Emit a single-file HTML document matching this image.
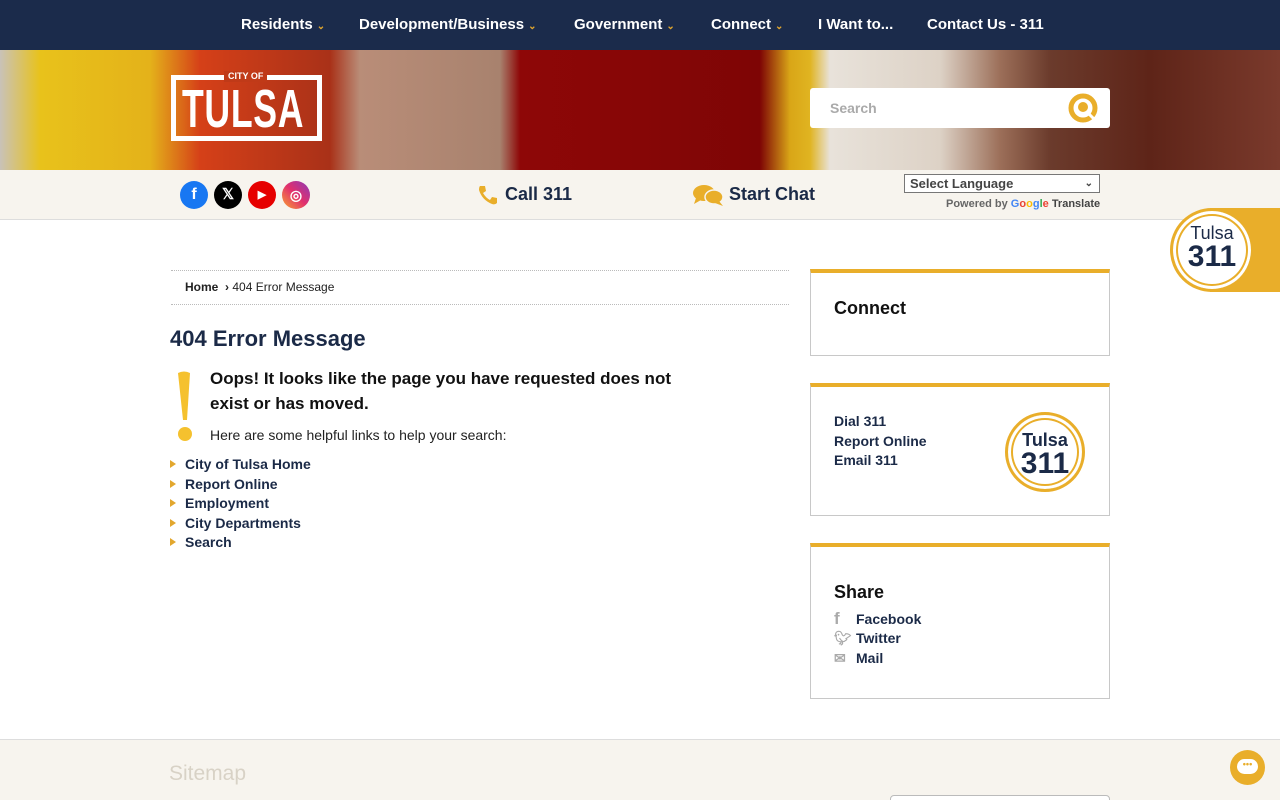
<!DOCTYPE html>
<html><head><meta charset="utf-8"><style>
*{margin:0;padding:0;box-sizing:border-box}
html,body{width:1280px;height:800px;overflow:hidden}
body{font-family:"Liberation Sans",sans-serif;color:#1b2a47;background:#fff;position:relative}
.nav{height:50px;background:#1b2b4b;color:#fff;font-weight:bold;font-size:15px;position:relative}
.nav span{position:absolute;top:16px;white-space:nowrap}
.nav i{color:#e2a72e;font-style:normal;font-size:10px;margin-left:4px}
.banner{position:absolute;top:50px;left:0;width:1280px;height:120px;overflow:hidden;
background:linear-gradient(90deg,#c9c2b8 0,#e8c21b 40px,#e4b21a 150px,#d54018 200px,#a93118 330px,#b98d78 360px,#a8826e 500px,#8e0707 520px,#7e0505 760px,#d9a617 790px,#e0b421 810px,#e8e2da 830px,#ddd2c6 940px,#9c6f59 1000px,#6b3b2c 1050px,#5e2418 1150px,#7a3a2c 1280px)}
.logo{position:absolute;left:171px;top:75px;width:151px;height:66px;border:5px solid #fff}
.logo .t{position:absolute;left:6px;top:2px;font-size:54px;font-weight:bold;color:#fff;letter-spacing:1px;line-height:54px;transform:scaleX(.66);transform-origin:left;white-space:nowrap}
.logo .c{position:absolute;left:48px;top:-9px;background:#c03a18;color:#fff;font-size:9px;font-weight:bold;padding:0 4px;line-height:11px}
.search{position:absolute;left:810px;top:88px;width:300px;height:40px;background:#fff;border-radius:3px}
.search span{position:absolute;left:20px;top:12px;color:#aaa;font-weight:bold;font-size:14px}
.bar{position:absolute;top:170px;left:0;width:1280px;height:50px;background:#f7f4ee;border-bottom:1px solid #ddd}
.soc{position:absolute;top:181px;width:28px;height:28px;border-radius:50%;color:#fff;font-weight:bold;text-align:center;line-height:28px;font-size:16px}
.bt{position:absolute;top:184px;font-weight:bold;font-size:18px;color:#1b2a47}
.sel{position:absolute;left:904px;top:174px;width:196px;height:19px;border:1px solid #777;background:#fff;font-size:13px;font-weight:bold;color:#444;padding-left:5px;line-height:17px}
.pw{position:absolute;left:946px;top:198px;font-size:11px;color:#666;font-weight:bold}
.crumb{position:absolute;left:171px;top:270px;width:618px;height:35px;border-top:1px dotted #bbb;border-bottom:1px dotted #bbb;font-size:12px;padding:9px 14px;color:#222}
h1{position:absolute;left:170px;top:326px;font-size:22px;font-weight:bold;color:#1b2a47}
.oops{position:absolute;left:210px;top:366px;font-size:17px;font-weight:bold;line-height:25px;color:#111;width:500px}
.help{position:absolute;left:210px;top:427px;font-size:14px;color:#222}
.links{position:absolute;left:170px;top:455px;font-size:14px;font-weight:bold;line-height:19.6px}
.links div:before{content:"";display:inline-block;border-left:6px solid #e2a72e;border-top:4px solid transparent;border-bottom:4px solid transparent;margin-right:9px;vertical-align:1px}
.box{position:absolute;left:810px;width:300px;border:1px solid #c8c8c8;border-top:4px solid #e9ae2a;background:#fff}
.box h3{font-size:18px;font-weight:bold;color:#111}
.ring{position:absolute;width:80px;height:80px;border-radius:50%;border:3px solid #e9ae2a;box-shadow:inset 0 0 0 3px #fff,inset 0 0 0 5px #e9ae2a;background:#fff;text-align:center;color:#1b2a47}
.ring .a{font-size:18px;margin-top:13px;line-height:18px}
.ring .b{font-size:30px;font-weight:bold;line-height:30px}
.foot{position:absolute;top:739px;left:0;width:1280px;height:61px;background:#f7f4ee;border-top:1px solid #ddd;overflow:hidden}
</style></head><body>
<div class="nav">
<span style="left:241px">Residents<i>⌄</i></span>
<span style="left:359px">Development/Business<i>⌄</i></span>
<span style="left:574px">Government<i>⌄</i></span>
<span style="left:711px">Connect<i>⌄</i></span>
<span style="left:818px">I Want to...</span>
<span style="left:927px">Contact Us - 311</span>
</div>
<div class="banner"></div>
<div class="logo"><div class="c">CITY OF</div><div class="t">TULSA</div></div>
<div class="search"><span>Search</span>
<svg style="position:absolute;left:258px;top:5px" width="30" height="30" viewBox="0 0 30 30"><circle cx="15" cy="15" r="12" fill="none" stroke="#e9ae2a" stroke-width="5"/><circle cx="15" cy="14" r="5" fill="#e9ae2a"/><path d="M19 19 L26 26" stroke="#fff" stroke-width="3"/></svg></div>
<div class="bar"></div>
<div class="soc" style="left:180px;background:#1877f2">f</div>
<div class="soc" style="left:214px;background:#000;font-size:15px">𝕏</div>
<div class="soc" style="left:248px;background:#e60000;font-size:11px">▶</div>
<div class="soc" style="left:282px;background:linear-gradient(45deg,#f9a430,#e2306c,#8a3ab9);font-size:14px">◎</div>
<svg style="position:absolute;left:477px;top:184px" width="22" height="22" viewBox="0 0 22 22"><path d="M3 2 L8 2 L9 7 L6 9 Q9 14 13 16 L15 13 L20 14 L20 19 Q18 21 15 20 Q5 16 2 6 Q2 3 3 2Z" fill="#e9ae2a"/></svg>
<div class="bt" style="left:505px">Call 311</div>
<svg style="position:absolute;left:692px;top:184px" width="32" height="24" viewBox="0 0 32 24"><ellipse cx="12" cy="9" rx="11" ry="8" fill="#e9ae2a"/><path d="M4 14 L2 20 L9 16Z" fill="#e9ae2a"/><ellipse cx="22" cy="13" rx="9" ry="7" fill="#e9ae2a" stroke="#f7f4ee" stroke-width="1.5"/><path d="M27 17 L31 22 L23 19Z" fill="#e9ae2a"/></svg>
<div class="bt" style="left:729px">Start Chat</div>
<div class="sel">Select Language<span style="position:absolute;right:6px;top:0;font-size:10px">⌄</span></div>
<div class="pw">Powered by <span style="color:#4285f4">G</span><span style="color:#ea4335">o</span><span style="color:#fbbc05">o</span><span style="color:#4285f4">g</span><span style="color:#34a853">l</span><span style="color:#ea4335">e</span> <span style="color:#444">Translate</span></div>
<div style="position:absolute;left:1210px;top:208px;width:70px;height:84px;background:#e9ae2a"></div>
<div class="ring" style="left:1170px;top:208px;width:84px;height:84px;border-width:3px"><div class="a">Tulsa</div><div class="b">311</div></div>
<div class="crumb"><b>Home</b> &nbsp;<b>›</b> 404 Error Message</div>
<h1>404 Error Message</h1>
<svg style="position:absolute;left:175px;top:370px" width="20" height="72" viewBox="0 0 20 72"><path d="M3 3 Q9 0 15 3 L12 50 L8 50Z" fill="#f5c12e"/><circle cx="10" cy="64" r="7" fill="#f5c12e"/></svg>
<div class="oops">Oops! It looks like the page you have requested does not exist or has moved.</div>
<div class="help">Here are some helpful links to help your search:</div>
<div class="links"><div>City of Tulsa Home</div><div>Report Online</div><div>Employment</div><div>City Departments</div><div>Search</div></div>
<div class="box" style="top:269px;height:87px;padding:25px 23px"><h3>Connect</h3></div>
<div class="box" style="top:383px;height:133px;padding:25px 23px;font-weight:bold;font-size:14px;line-height:19.5px">Dial 311<br>Report Online<br>Email 311
<div class="ring" style="left:194px;top:25px"><div class="a" style="margin-top:16px">Tulsa</div><div class="b">311</div></div></div>
<div class="box" style="top:543px;height:156px;padding:36px 23px;font-weight:bold;font-size:14px;line-height:19.5px"><h3 style="margin-bottom:6px">Share</h3>
<div><span style="color:#aaa;display:inline-block;width:22px;font-size:17px">f</span>Facebook</div>
<div><span style="color:#aaa;display:inline-block;width:22px">🐦︎</span>Twitter</div>
<div><span style="color:#aaa;display:inline-block;width:22px">✉</span>Mail</div></div>
<div class="foot"><div style="position:absolute;left:169px;top:22px;font-size:21px;color:#d8d2c6">Sitemap</div>
<div style="position:absolute;left:890px;top:55px;width:220px;height:20px;background:#fff;border:1px solid #bbb;border-radius:4px"></div>
<div style="position:absolute;left:1230px;top:10px;width:35px;height:35px;border-radius:50%;background:#e9ae2a"><div style="position:absolute;left:7px;top:9px;width:21px;height:15px;background:#fff;border-radius:8px;font-size:9px;color:#e9ae2a;text-align:center;line-height:11px;font-weight:bold">•••</div></div></div>
</body></html>
